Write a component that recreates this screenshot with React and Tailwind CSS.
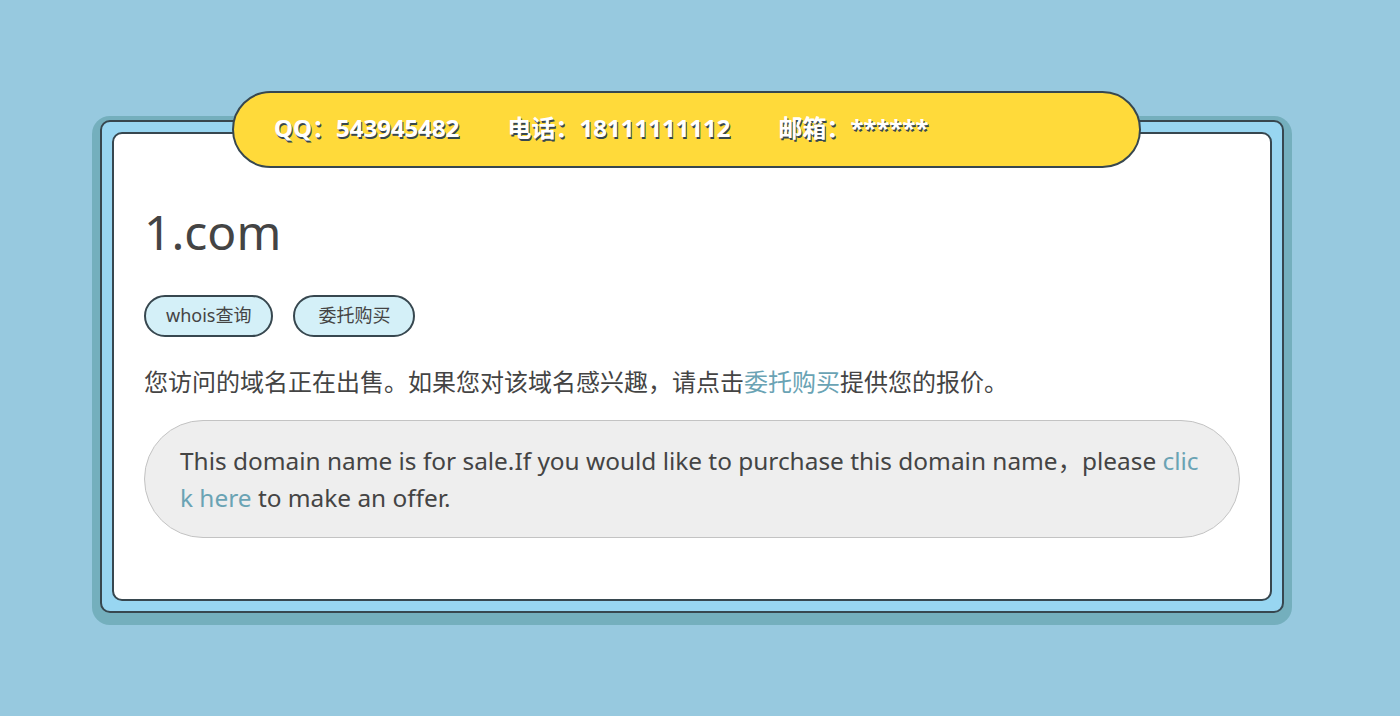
export default function App() {
  const font = { fontFamily: '"Noto Sans", "Noto Sans CJK SC", sans-serif' };
  return (
    <div className="min-h-[716px] w-full bg-[#97c9df] pt-[120px] pl-[100px]" style={font}>
      <div className="relative w-[1184px] rounded-[10px] border-2 border-[#37474f] bg-[#98d6f1] p-[10px] shadow-[0_4px_0_8px_#74afbd]">
        <div className="absolute left-[130px] top-[-31px] flex h-[77px] w-[909px] items-center gap-[48px] rounded-full border-2 border-[#37474f] bg-[#ffda3a] pl-[40px] pb-[3px] text-[24px] font-bold text-white [text-shadow:1px_2px_0_#37474f]">
          <span>QQ：543945482</span>
          <span>电话：18111111112</span>
          <span>邮箱：******</span>
        </div>
        <div className="rounded-[10px] border-2 border-[#37474f] bg-white px-[30px] pt-[72px] pb-[61px] text-[#444]">
          <h1 className="text-[48px] leading-[1.1] text-[#444]">1.com</h1>
          <div className="mt-[36px] flex gap-[20px]">
            <span className="flex h-[42px] items-center rounded-full border-2 border-[#37474f] bg-[#d4f0f8] px-[20px] text-[18px] text-[#444]">whois查询</span>
            <span className="flex h-[42px] items-center rounded-full border-2 border-[#37474f] bg-[#d4f0f8] px-[23px] text-[18px] text-[#444]">委托购买</span>
          </div>
          <p className="mt-[27px] text-[24px] leading-[1.5] text-[#444]">
            您访问的域名正在出售。如果您对该域名感兴趣，请点击<span className="text-[#6aa3b4]">委托购买</span>提供您的报价。
          </p>
          <div className="mt-[20px] rounded-[60px] border border-[#c3c3c3] bg-[#eeeeee] pl-[35px] pr-[35px] py-[21px] text-[24.4px] leading-[37px] text-[#444] [word-break:break-all]">
            This domain name is for sale.If you would like to purchase this domain name，please <span className="text-[#6aa3b4]">click here</span> to make an offer.
          </div>
        </div>
      </div>
    </div>
  );
}
